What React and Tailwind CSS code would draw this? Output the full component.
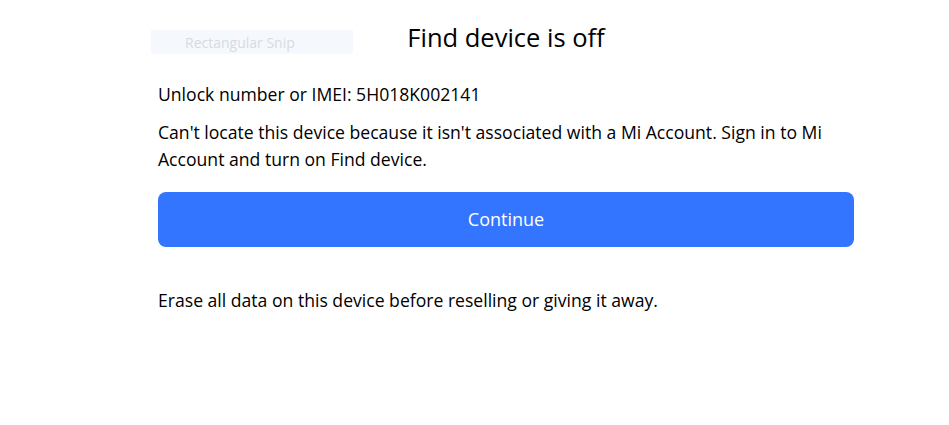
import React from "react";

const App = () => {
  return (
    <div className="relative w-[949px] h-[425px] bg-white font-['Open_Sans',sans-serif] text-black">
      {/* snip tool ghost */}
      <div className="absolute left-[151px] top-[30px] w-[202px] h-[24px] bg-[#f5f9fe] flex items-center pl-[34px] text-[14px] text-[#d6dbe2]">
        Rectangular Snip
      </div>

      <div className="w-[696px] ml-[158px] pt-[20px]">
        <h1 className="text-center text-[25.5px] leading-[34px]">Find device is off</h1>
        <p className="mt-[28px] text-[17.6px] leading-[24px]">
          Unlock number or IMEI: 5H018K002141
        </p>
        <p className="mt-[13px] text-[17.6px] leading-[27px]">
          Can't locate this device because it isn't associated with a Mi Account. Sign in to Mi
          Account and turn on Find device.
        </p>
        <button className="mt-[19px] w-full h-[55px] rounded-[8px] bg-[#3375ff] text-white text-[18px]">
          Continue
        </button>
        <p className="mt-[41px] text-[17.6px] leading-[24px]">
          Erase all data on this device before reselling or giving it away.
        </p>
      </div>
    </div>
  );
};

export default App;
